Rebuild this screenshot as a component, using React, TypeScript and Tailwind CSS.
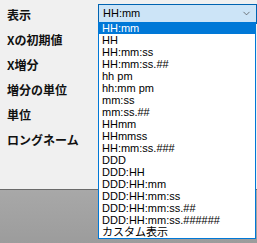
import { ChevronDown } from 'lucide-react';

const labels = ['表示', 'Xの初期値', 'X増分', '増分の単位', '単位', 'ロングネーム'];

const formats = [
	'HH:mm',
	'HH',
	'HH:mm:ss',
	'HH:mm:ss.##',
	'hh pm',
	'hh:mm pm',
	'mm:ss',
	'mm:ss.##',
	'HHmm',
	'HHmmss',
	'HH:mm:ss.###',
	'DDD',
	'DDD:HH',
	'DDD:HH:mm',
	'DDD:HH:mm:ss',
	'DDD:HH:mm:ss.##',
	'DDD:HH:mm:ss.######',
	'カスタム表示',
];

export default function App() {
	const selected = 'HH:mm';

	return (
		<div className="relative w-[257px] h-[243px] overflow-hidden bg-[#f0f0f0] font-['Liberation_Sans','Noto_Sans_CJK_JP',sans-serif]">
			{/* Property panel */}
			<div className="h-[189px] bg-[#f0f0f0] flex flex-col pt-[1px]">
				{labels.map((label, i) => (
					<div key={label} className="h-[25px] flex items-center pl-[7px]">
						<span className="w-[91px] text-[12px] font-bold text-[#111] font-['Noto_Sans_CJK_JP',sans-serif] leading-none pt-[2px]">
							{label}
						</span>
						{i === 0 && (
							<div className="h-[20px] w-[159px] flex items-center justify-between border border-[#0063b1] bg-[#cce4f7] pl-[4px] pr-[4px]">
								<span className="text-[11px] text-black leading-none">{selected}</span>
								<ChevronDown size={11} strokeWidth={1.5} className="text-[#444]" />
							</div>
						)}
					</div>
				))}
			</div>

			{/* Area below the panel */}
			<div className="h-[54px] border-t border-[#6a6a6a] bg-gradient-to-b from-[#a8a8a8] to-[#9c9c9c]" />

			{/* Open dropdown list */}
			<ul className="absolute left-[98px] top-[22px] w-[158px] bg-white border border-t-0 border-[#0078d7]">
				{formats.map(f => (
					<li
						key={f}
						className={`h-[12px] pl-[3px] text-[11px] leading-[12px] whitespace-nowrap ${f === selected
							? 'bg-[#0078d7] text-white'
							: 'text-black'
							}`}
					>
						{f}
					</li>
				))}
			</ul>
		</div>
	);
}
